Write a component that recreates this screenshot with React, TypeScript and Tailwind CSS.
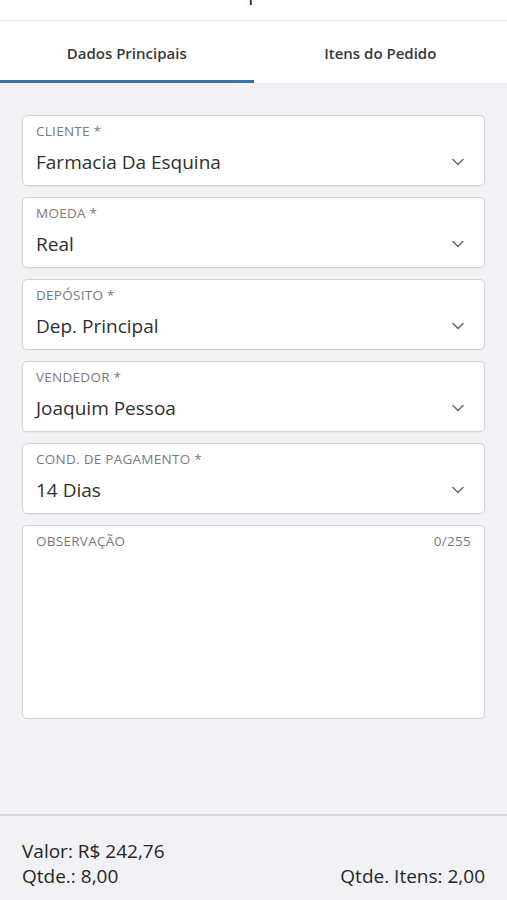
import { ChevronDown } from "lucide-react";

const fields = [
  { label: "CLIENTE *", value: "Farmacia Da Esquina" },
  { label: "MOEDA *", value: "Real" },
  { label: "DEPÓSITO *", value: "Dep. Principal" },
  { label: "VENDEDOR *", value: "Joaquim Pessoa" },
  { label: "COND. DE PAGAMENTO *", value: "14 Dias" },
];

function SelectField({ label, value }: { label: string; value: string }) {
  return (
    <div className="h-[71px] rounded-[5px] border border-[#d4d4d4] bg-white px-[13px] pt-[6px] shadow-[0_1px_1px_rgba(0,0,0,0.04)]">
      <p className="text-[13.5px] leading-[19px] tracking-[0.02em] text-[#7a7a7a]">{label}</p>
      <div className="mt-[8px] flex items-center justify-between">
        <span className="text-[19px] leading-[26px] text-[#303030]">{value}</span>
        <ChevronDown size={20} strokeWidth={1.8} className="mr-[3px] text-[#6b6b6b]" />
      </div>
    </div>
  );
}

export default function App() {
  return (
    <div
      className="flex h-[900px] w-full flex-col overflow-hidden bg-[#f0f2f5]"
      style={{ fontFamily: "'Open Sans', Roboto, sans-serif" }}
    >
      <header className="h-[21px] shrink-0 overflow-hidden border-b border-[#ebebeb] bg-white">
        <h1 className="-mt-[19px] text-center text-[20px] leading-[24px] font-medium text-[#222]">
          Novo pedido
        </h1>
      </header>

      <nav className="flex h-[62px] shrink-0 bg-white">
        <button
          type="button"
          className="flex-1 border-b-[3px] border-[#3c6ea3] pt-[5px] text-[15px] font-semibold text-[#383838]"
        >
          Dados Principais
        </button>
        <button
          type="button"
          className="flex-1 border-b-[3px] border-transparent pt-[5px] text-[15px] font-semibold text-[#383838]"
        >
          Itens do Pedido
        </button>
      </nav>

      <main className="flex flex-1 flex-col gap-[11px] px-[22px] pt-[32px]">
        {fields.map((f) => (
          <SelectField key={f.label} label={f.label} value={f.value} />
        ))}
        <div className="h-[194px] rounded-[5px] border border-[#d4d4d4] bg-white px-[13px] pt-[6px]">
          <div className="flex justify-between text-[13.5px] leading-[19px] tracking-[0.02em] text-[#7a7a7a]">
            <span>OBSERVAÇÃO</span>
            <span>0/255</span>
          </div>
        </div>
      </main>

      <footer className="h-[86px] shrink-0 border-t-2 border-[#d6d6d6] px-[22px] pt-[23px] text-[19px] leading-[25px] text-[#262626]">
        <p>Valor: R$ 242,76</p>
        <div className="flex justify-between">
          <span>Qtde.: 8,00</span>
          <span>Qtde. Itens: 2,00</span>
        </div>
      </footer>
    </div>
  );
}
